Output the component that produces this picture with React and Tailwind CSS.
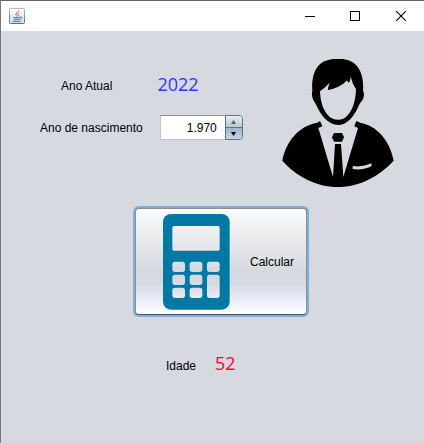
import { useState } from "react";

function JavaIcon() {
  return (
    <svg viewBox="0 0 48 48" className="size-4" aria-hidden="true">
      <defs>
        <linearGradient id="java-tile" x1="0" y1="0" x2="0" y2="1">
          <stop offset="0" stopColor="#ffffff" />
          <stop offset="1" stopColor="#cfdbe2" />
        </linearGradient>
        <linearGradient id="java-edge" x1="0" y1="0" x2="0" y2="1">
          <stop offset="0" stopColor="#a9bccb" />
          <stop offset="1" stopColor="#4d7391" />
        </linearGradient>
      </defs>
      <rect x="1.5" y="1.5" width="45" height="45" rx="3" fill="url(#java-tile)" stroke="url(#java-edge)" strokeWidth="3" />
      <path d="M30 7c2 4-9 7-8 11 0 3 4 4 1 8M27 13c-6 2-8 5-5 8M30 16c-3 2-3 4-1 8" fill="none" stroke="#e3762b" strokeWidth="3" />
      <path d="M13 29h20M15 34h16M11 40h24M32 27c8-2 8 5 0 7" fill="none" stroke="#47799c" strokeWidth="3" />
    </svg>
  );
}

function PersonIcon() {
  return (
    <svg viewBox="36 27 336 384" className="h-32 w-28" role="img" aria-label="Pessoa">
      <path
        fillRule="evenodd"
        d="M127 123C124 88 132 55 154 39C172 25 222 21 245 35C271 49 282 82 279 123C284 128 282 142 277 151C271 157 267 166 263 174C250 202 230 225 204 225C178 225 158 202 145 178C141 168 137 162 133 155C126 146 124 130 127 123ZM150 124C151 155 160 181 174 196C187 213 219 215 233 196C248 180 257 151 258 117C251 107 245 94 242 78C242 87 240 95 236 99C235 95 233 93 230 92C218 105 194 117 174 120C174 112 177 104 179 97C171 107 161 117 150 124Z"
      />
      <path d="M150 213L157 229L145 234L189 381L195 282H213L220 381L264 234L253 229L259 213L272 219C318 226 359 269 371 332C329 377 270 411 204 411C138 411 78 378 37 332C48 272 91 226 140 219Z" />
      <path d="M192 249H216L222 262L216 275H192L186 262Z" />
      <path d="M248 348C268 351 286 348 304 340L305 348C289 357 269 360 248 357Z" fill="#d6d9e0" />
    </svg>
  );
}

function CalculatorIcon() {
  return (
    <svg viewBox="115 42 201 288" className="h-24 w-[67px] shrink-0" aria-hidden="true">
      <mask id="calc-keys" maskUnits="userSpaceOnUse" x="115" y="42" width="201" height="288">
        <rect x="115" y="42" width="201" height="288" fill="white" />
        <g fill="black">
          <rect x="143" y="78" width="142" height="74" rx="5" />
          <rect x="143" y="185" width="38" height="31" rx="8" />
          <rect x="195" y="185" width="38" height="31" rx="8" />
          <rect x="247" y="185" width="38" height="31" rx="8" />
          <rect x="143" y="224" width="38" height="31" rx="8" />
          <rect x="195" y="224" width="38" height="31" rx="8" />
          <rect x="247" y="224" width="38" height="70" rx="8" />
          <rect x="143" y="263" width="38" height="31" rx="8" />
          <rect x="195" y="263" width="38" height="31" rx="8" />
        </g>
      </mask>
      <rect x="115" y="42" width="200" height="287" rx="24" fill="#0079a5" mask="url(#calc-keys)" />
    </svg>
  );
}

function TitleBar() {
  return (
    <header className="flex h-[31px] items-center justify-between border-t border-[#666366] bg-white pl-2">
      <JavaIcon />
      <div className="flex h-full">
        <button type="button" aria-label="Minimizar" className="flex w-11 items-center justify-center">
          <svg viewBox="0 0 10 10" className="size-[10px]" shapeRendering="crispEdges">
            <path d="M0 5h10v1H0z" />
          </svg>
        </button>
        <button type="button" aria-label="Maximizar" className="flex w-[46px] items-center justify-center">
          <svg viewBox="0 0 10 10" className="size-[10px]" shapeRendering="crispEdges">
            <path d="M.5.5h9v9h-9z" fill="none" stroke="black" />
          </svg>
        </button>
        <button type="button" aria-label="Fechar" className="flex w-[46px] items-center justify-center">
          <svg viewBox="0 0 10 10" className="size-[10px]">
            <path d="M0 0l10 10M10 0L0 10" stroke="black" strokeWidth="1.1" />
          </svg>
        </button>
      </div>
    </header>
  );
}

function YearSpinner({ value, onChange }) {
  return (
    <div className="flex h-[25px] w-[83px]">
      <input
        id="nascimento"
        inputMode="numeric"
        value={value.toLocaleString("de-DE")}
        onChange={(e) => onChange(Number(e.target.value.replace(/\D/g, "")))}
        className="w-[65px] border border-r-0 border-[#bfc2c8] border-t-[#8d9095] bg-white pt-px pr-2 text-right text-xs outline-none"
      />
      <div className="flex w-[18px] flex-col overflow-hidden rounded-r border border-[#5f7386]">
        <button
          type="button"
          aria-label="Aumentar"
          onClick={() => onChange(value + 1)}
          className="flex flex-1 items-center justify-center border-b border-[#5f7386] bg-linear-to-b from-[#e9eef3] to-[#b9c6d3]"
        >
          <svg viewBox="0 0 5 4" className="h-1 w-[5px]">
            <path d="M2.5 0L5 4H0z" fill="#5c6065" />
          </svg>
        </button>
        <button
          type="button"
          aria-label="Diminuir"
          onClick={() => onChange(value - 1)}
          className="flex flex-1 items-center justify-center bg-linear-to-b from-[#9fb4c8] to-[#c3d4e4]"
        >
          <svg viewBox="0 0 5 4" className="h-1 w-[5px]">
            <path d="M0 0h5L2.5 4z" />
          </svg>
        </button>
      </div>
    </div>
  );
}

export default function App() {
  const currentYear = 2022;
  const [birthYear, setBirthYear] = useState(1970);
  const [age, setAge] = useState(52);

  return (
    <div className="flex min-h-screen flex-col border-l border-[#77757a] bg-[#d6d9e0] font-['Liberation_Sans',Arial,sans-serif] text-xs text-black">
      <TitleBar />
      <main className="flex flex-1 flex-col">
        <section className="flex justify-between pt-7 pr-[30px] pl-[39px]">
          <div className="flex flex-col gap-4 pt-[14px]">
            <div className="flex h-[26px] items-center gap-[45px] pl-[21px]">
              <span>Ano Atual</span>
              <output className="pb-1 font-['Open_Sans','Noto_Sans',sans-serif] text-lg text-[#3333ff]">{currentYear}</output>
            </div>
            <div className="flex items-center justify-between gap-[17px]">
              <label htmlFor="nascimento" className="pt-px">Ano de nascimento</label>
              <YearSpinner value={birthYear} onChange={setBirthYear} />
            </div>
          </div>
          <PersonIcon />
        </section>

        <div className="pt-[19px] pl-[132px]">
          <button
            type="button"
            onClick={() => setAge(currentYear - birthYear)}
            className="flex h-[111px] w-44 rounded-md bg-[#7fadd8] p-[2px]"
          >
            <span className="flex h-full w-full items-center gap-5 rounded border border-[#8d9095] border-b-[#50545c] bg-[linear-gradient(to_bottom,#fafafb_0%,#e6e7ea_35%,#d6d9e0_60%,#d6d9e0_70%,#ebeffb_88%,#ffffff_100%)] pl-[27px]">
              <CalculatorIcon />
              <span className="pt-px">Calcular</span>
            </span>
          </button>
        </div>

        <div className="flex items-center gap-[19px] pt-8 pl-[165px]">
          <span className="pt-px">Idade</span>
          <output className="pb-1 font-['Open_Sans','Noto_Sans',sans-serif] text-lg text-[#ff0033]">{age}</output>
        </div>
      </main>
    </div>
  );
}
